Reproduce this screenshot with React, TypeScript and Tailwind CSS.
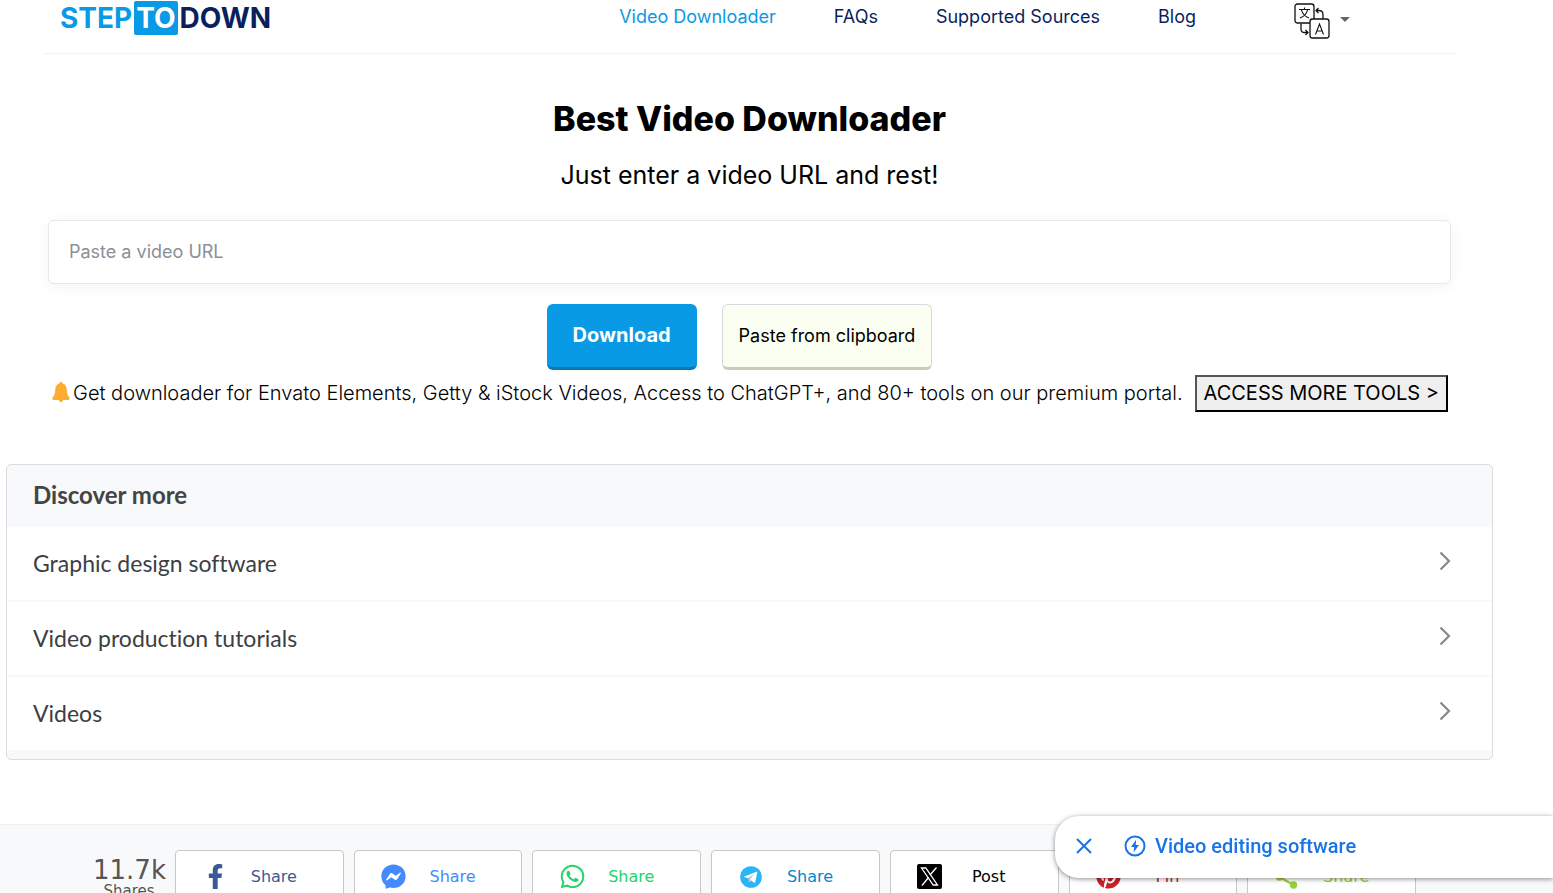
import type { ReactNode } from "react"
import { FaFacebookF, FaFacebookMessenger, FaPinterest, FaWhatsapp } from "react-icons/fa"

const navLinks = [
  { label: "Video Downloader", active: true },
  { label: "FAQs", active: false },
  { label: "Supported Sources", active: false },
  { label: "Blog", active: false },
]

const topics = ["Graphic design software", "Video production tutorials", "Videos"]

function TranslateIcon() {
  return (
    <svg width="36" height="36" viewBox="0 0 36 36" fill="none" stroke="#111" strokeWidth="1.3" aria-hidden="true">
      <rect x="1" y="1" width="19" height="19" rx="2.5" />
      <rect x="16" y="16" width="19" height="19" rx="2.5" fill="#fff" />
      <g strokeWidth="1.1">
        <path d="M5 6.500h11M10.500 4.500v2M7.500 7c.8 3.500 3.500 6.500 7.500 8M13.500 7c-.8 3.500-3.500 6.500-7.500 8" />
        <path d="M21.500 31.500 25.500 21l4 10.500M23 28h5" />
      </g>
      <path d="M29 16v-4.500q0-4-4-4h-3M24.500 5 22 7.500l2.500 2.500" />
      <path d="M7 21v5q0 3.500 3.500 3.500H14M11.500 27l2.500 2.500-2.500 2.500" />
    </svg>
  )
}

function BellIcon() {
  return (
    <svg width="20" height="20" viewBox="0 0 20 20" fill="#ffac33" className="mb-1 shrink-0" aria-hidden="true">
      <circle cx="10" cy="17.800" r="2.200" />
      <path d="M10 0c-1 0-1.700.7-1.700 1.600C5.600 2.300 4.300 4.600 4.200 8c-.1 3.200-.6 5-1.700 6.300-.7.800-1.100 1.400-1.100 2.200 0 .9.600 1.500 1.500 1.500h14.200c.9 0 1.500-.6 1.500-1.500 0-.8-.4-1.400-1.100-2.200-1.100-1.300-1.600-3.100-1.700-6.300-.1-3.400-1.400-5.700-4.100-6.400C11.700.7 11 0 10 0z" />
    </svg>
  )
}

function ChevronIcon() {
  return (
    <svg width="12" height="20" viewBox="0 0 12 20" fill="none" stroke="#888" strokeWidth="2.200" aria-hidden="true">
      <path d="M1.500 1.500 10 10l-8.500 8.500" />
    </svg>
  )
}

function TelegramIcon() {
  return (
    <svg width="22" height="22" viewBox="0 0 22 22" aria-hidden="true">
      <circle cx="11" cy="11" r="10.800" fill="#29b6f6" />
      <path d="M3.800 10.800 16.400 5.700c.7-.2 1.100.1.900.900l-2.100 9.600c-.1.700-.6.800-1.100.5L8 12.300z" fill="#fff" />
      <path d="M8 12.300 14.500 7.600 9.800 13.200 9.100 16.600z" fill="#b0bec5" />
      <path d="M9.800 13.200l1.700 1.300-2.400 2.100z" fill="#cfd8dc" />
    </svg>
  )
}

function XIcon() {
  return (
    <svg width="25" height="25" viewBox="0 0 25 25" aria-hidden="true">
      <rect width="25" height="25" rx="2" fill="#000" />
      <g fill="none" stroke="#fff" strokeWidth="1.300">
        <path d="M4.500 4h4.300l11.700 17h-4.300z" />
        <path d="M19.500 3.500l-6.500 7.500M11.500 13.500 5 21.500" />
      </g>
    </svg>
  )
}

function ShareNodesIcon() {
  return (
    <svg width="24" height="24" viewBox="0 0 24 24" fill="#95d03a" aria-hidden="true">
      <circle cx="4.500" cy="12" r="3.700" />
      <circle cx="18.500" cy="4" r="3.700" />
      <circle cx="18.500" cy="20" r="3.700" />
      <path d="M18.500 4 4.500 12l14 8" fill="none" stroke="#95d03a" strokeWidth="2.200" />
    </svg>
  )
}

function BoltIcon() {
  return (
    <svg width="22" height="22" viewBox="0 0 22 22" aria-hidden="true">
      <circle cx="11" cy="11" r="9.500" fill="none" stroke="#1a73e8" strokeWidth="2" />
      <path d="M12.200 4.500 7 12h3.200l-.6 5.500L15 10h-3.300z" fill="#1a73e8" />
    </svg>
  )
}

const shares: { label: string; color: string; icon: ReactNode }[] = [
  { label: "Share", color: "text-[#3b5998]", icon: <FaFacebookF size={25} /> },
  { label: "Share", color: "text-[#448aff]", icon: <FaFacebookMessenger size={25} /> },
  { label: "Share", color: "text-[#25d366]", icon: <FaWhatsapp size={27} /> },
  { label: "Share", color: "text-[#0088cc]", icon: <TelegramIcon /> },
  { label: "Post", color: "text-black", icon: <XIcon /> },
  { label: "Pin", color: "text-[#cb2027]", icon: <FaPinterest size={25} /> },
  { label: "Share", color: "text-[#95d03a]", icon: <ShareNodesIcon /> },
]

export default function App() {
  return (
    <div className="h-screen overflow-hidden bg-white font-['Inter',sans-serif] text-black">
      <div className="pr-[54px]">
        {/* Header */}
        <header className="mx-11 flex h-[54px] items-start border-b border-[#f2f2f2] pl-4">
          <a href="#" className="flex gap-[2px] pt-px text-[28px] leading-[34px] font-bold text-[#0a1f5c]">
            <span className="text-[#099ae5]">STEP</span>
            <span className="rounded-xs bg-[#099ae5] px-[2px] text-white">TO</span>
            <span>DOWN</span>
          </a>
          <nav className="ml-auto flex gap-[58px] pt-1 text-lg leading-[26px]">
            {navLinks.map((link) => (
              <a key={link.label} href="#" className={link.active ? "text-[#099ae5]" : "text-[#0a1f5c]"}>
                {link.label}
              </a>
            ))}
          </nav>
          <button type="button" aria-label="Change language" className="mr-[105px] ml-[98px] flex items-center gap-[10px] pt-[3px]">
            <TranslateIcon />
            <span className="mb-1 border-x-5 border-t-5 border-x-transparent border-t-[#666]" />
          </button>
        </header>

        {/* Search */}
        <section className="mx-12 text-center">
          <h1 className="pt-[43px] text-[34px] leading-[44px] font-extrabold">Best Video Downloader</h1>
          <p className="pt-[17px] text-[25px] leading-[34px]">Just enter a video URL and rest!</p>
          <form className="pt-7" onSubmit={(e) => e.preventDefault()}>
            <input
              type="text"
              aria-label="Video URL"
              placeholder="Paste a video URL"
              className="block h-16 w-full rounded-md border border-[#e4e7ec] px-5 pb-[2px] text-lg shadow-[0_2px_16px_rgba(0,0,0,0.05)] outline-none placeholder:text-[#8a8f98]"
            />
            <div className="mr-5 flex justify-center gap-[25px] pt-5">
              <button type="submit" className="h-[66px] rounded-md border-b-3 border-[#077bb8] bg-[#099ae5] px-[26px] pb-[2px] text-xl font-bold text-white">
                Download
              </button>
              <button type="button" className="h-[66px] rounded-md border border-b-3 border-[#d5dade] border-b-[#c8ccbc] bg-[#fbfff2] px-4 text-lg">
                Paste from clipboard
              </button>
            </div>
          </form>
          <div className="flex items-center justify-center pt-[5px] text-xl font-light whitespace-nowrap">
            <BellIcon />
            <span className="mr-3 ml-[2px] pb-[2px]">
              Get downloader for Envato Elements, Getty &amp; iStock Videos, Access to ChatGPT+, and 80+ tools on our premium portal.
            </span>
            <button type="button" className="h-[37px] border-2 border-t-[#555] border-r-black border-b-black border-l-[#555] bg-[#efefef] px-[7px] pb-[2px] font-normal">
              ACCESS MORE TOOLS &gt;
            </button>
          </div>
        </section>

        {/* Discover more */}
        <section className="mx-[6px] mt-[52px] overflow-hidden rounded-[5px] border border-[#dadce0] bg-[#f8f9fb] pb-[9px] font-['Lato',sans-serif] text-[#3c4043]">
          <h2 className="px-[26px] pt-[15px] pb-[17px] text-2xl leading-[30px] font-bold text-[#444]">Discover more</h2>
          <ul className="flex flex-col gap-[2px] [font-variant-ligatures:none]">
            {topics.map((topic) => (
              <li key={topic} className="bg-white">
                <a href="#" className="flex h-[73px] items-center justify-between pr-[41px] pb-[5px] pl-[26px] text-[23px]">
                  <span className="pt-[5px]">{topic}</span>
                  <ChevronIcon />
                </a>
              </li>
            ))}
          </ul>
        </section>
      </div>

      {/* Share bar */}
      <section className="mt-16 border-t border-[#f0f0f0] bg-[#f8f9fb] pt-[25px] pr-[137px] pb-10 pl-[83px] font-['DejaVu_Sans',sans-serif]">
        <div className="flex gap-[10px]">
          <div className="w-[82px] shrink-0 pt-[6px] pl-[10px] text-center text-[#555]">
            <div className="text-[26px] leading-[28px]">11.7k</div>
            <div className="text-[15px] leading-[14px]">Shares</div>
          </div>
          {shares.map((share, i) => (
            <button
              key={i}
              type="button"
              className={`flex h-[54px] flex-1 items-center rounded-sm border border-[#c8c8c8] bg-white pr-[26px] pb-px pl-[23px] text-base ${share.color}`}
            >
              <span className="flex w-8 justify-center">{share.icon}</span>
              <span className="flex-1 text-center">{share.label}</span>
            </button>
          ))}
        </div>
      </section>

      {/* Suggestion pill */}
      <aside className="fixed right-0 bottom-[15px] flex h-[62px] w-[498px] items-center rounded-l-3xl bg-white pb-[2px] pl-[21px] font-['Roboto',sans-serif] text-xl font-medium text-[#1a73e8] shadow-[0_1px_5px_rgba(0,0,0,0.45)]">
        <button type="button" aria-label="Close" className="mr-8">
          <svg width="16" height="16" viewBox="0 0 16 16" stroke="currentColor" strokeWidth="2" aria-hidden="true">
            <path d="M1 1l14 14M15 1 1 15" />
          </svg>
        </button>
        <a href="#" className="flex items-center gap-[9px]">
          <BoltIcon />
          Video editing software
        </a>
      </aside>
    </div>
  )
}
